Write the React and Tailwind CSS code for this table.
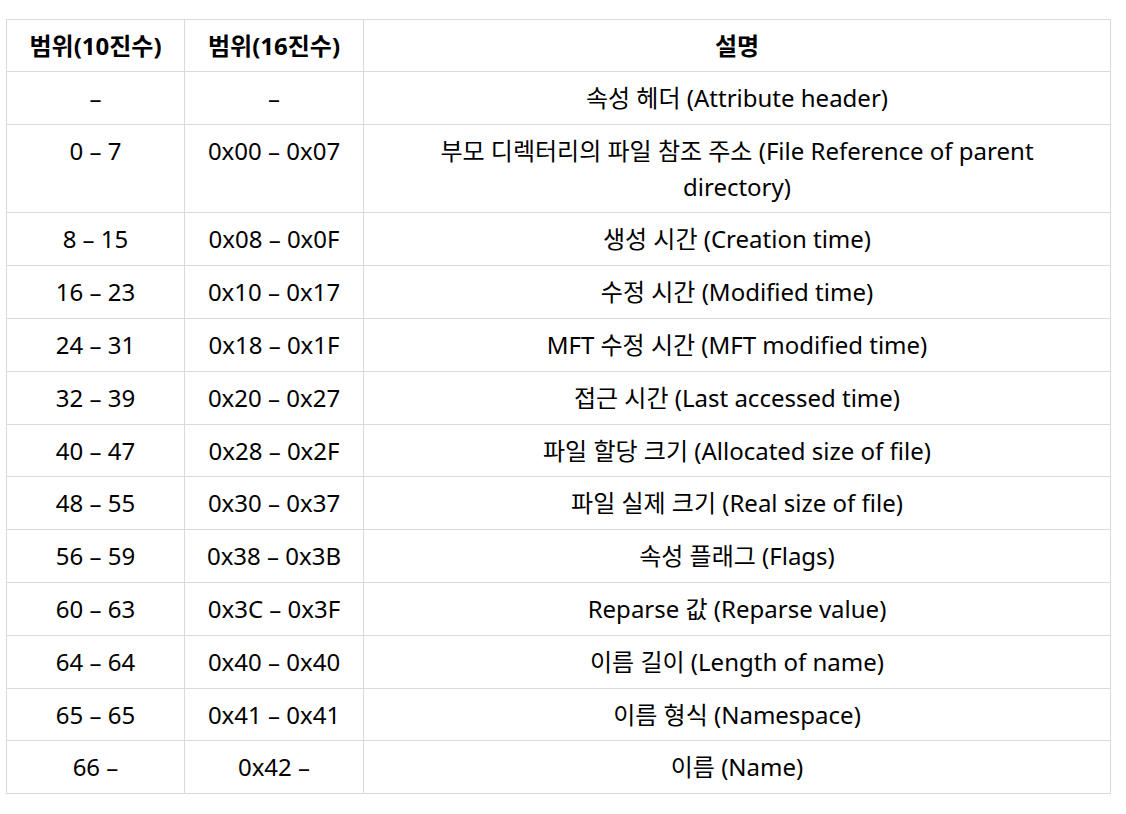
const rows = [
  ['–', '–', '속성 헤더 (Attribute header)'],
  ['0 – 7', '0x00 – 0x07', '부모 디렉터리의 파일 참조 주소 (File Reference of parent directory)'],
  ['8 – 15', '0x08 – 0x0F', '생성 시간 (Creation time)'],
  ['16 – 23', '0x10 – 0x17', '수정 시간 (Modified time)'],
  ['24 – 31', '0x18 – 0x1F', 'MFT 수정 시간 (MFT modified time)'],
  ['32 – 39', '0x20 – 0x27', '접근 시간 (Last accessed time)'],
  ['40 – 47', '0x28 – 0x2F', '파일 할당 크기 (Allocated size of file)'],
  ['48 – 55', '0x30 – 0x37', '파일 실제 크기 (Real size of file)'],
  ['56 – 59', '0x38 – 0x3B', '속성 플래그 (Flags)'],
  ['60 – 63', '0x3C – 0x3F', 'Reparse 값 (Reparse value)'],
  ['64 – 64', '0x40 – 0x40', '이름 길이 (Length of name)'],
  ['65 – 65', '0x41 – 0x41', '이름 형식 (Namespace)'],
  ['66 –', '0x42 –', '이름 (Name)'],
];

export default function App() {
  return (
    <div className="min-h-screen bg-white px-[6px] pt-[19px] text-black">
      <table
        className="w-[1105px] table-fixed border-collapse text-center text-[24px]"
        style={{ fontFamily: '"Noto Sans", "Noto Sans CJK KR", sans-serif' }}
      >
        <colgroup>
          <col className="w-[178px]" />
          <col className="w-[179px]" />
          <col />
        </colgroup>
        <thead>
          <tr>
            <th className="border border-[#dadada] px-1 py-2 text-[24px] font-bold leading-[35px]">범위(10진수)</th>
            <th className="border border-[#dadada] px-1 py-2 text-[24px] font-bold leading-[35px]">범위(16진수)</th>
            <th className="border border-[#dadada] px-1 py-2 text-[24px] font-bold leading-[35px]">설명</th>
          </tr>
        </thead>
        <tbody>
          {rows.map((r) => (
            <tr key={r[1] + r[2]}>
              <td className="border border-[#dadada] px-2 py-2 align-top leading-[35.8px]">{r[0]}</td>
              <td className="border border-[#dadada] px-2 py-2 align-top leading-[35.8px]">{r[1]}</td>
              <td className="border border-[#dadada] px-12 py-2 align-top leading-[35.8px]">{r[2]}</td>
            </tr>
          ))}
        </tbody>
      </table>
    </div>
  );
}
